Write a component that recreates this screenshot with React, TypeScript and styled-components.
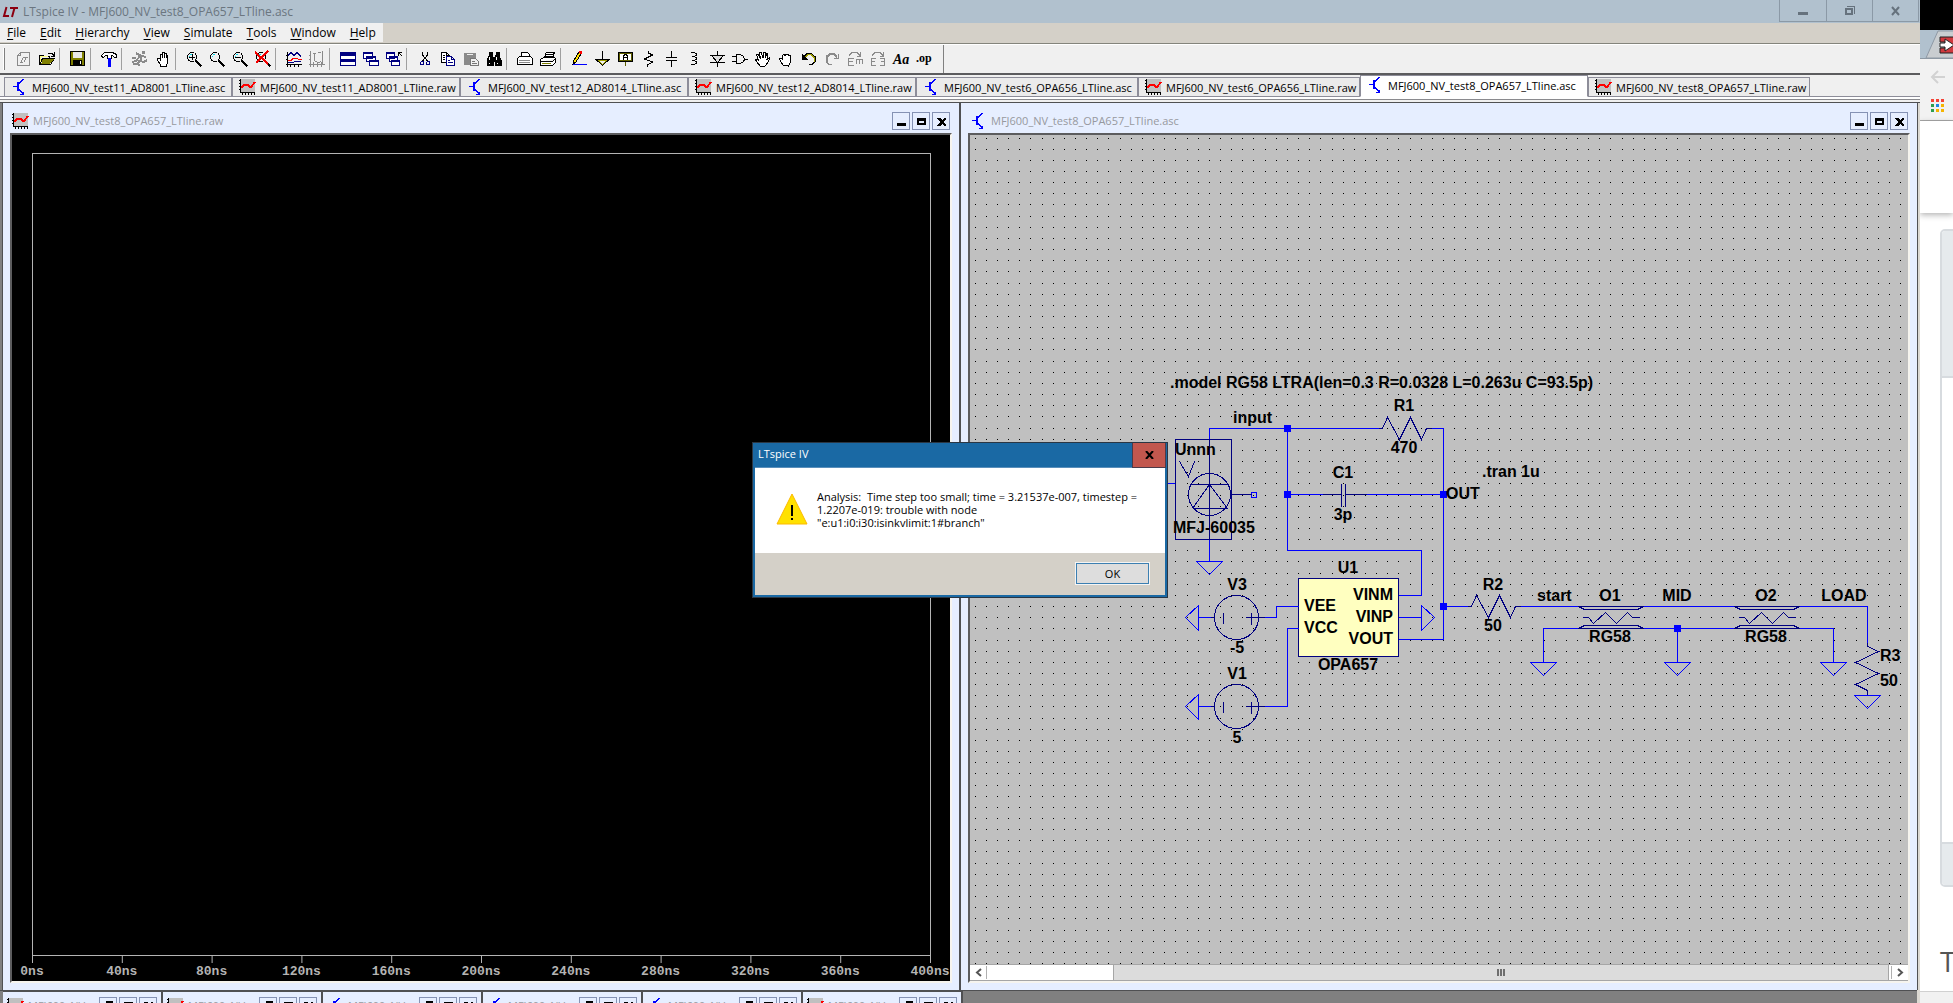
import React from "react";
import styled, { createGlobalStyle } from "styled-components";

const UI = `"Open Sans", "Noto Sans", sans-serif`;
const NAVY = "#000080";
const WIRE = "#0000ff";
const CHROME = "#f0f0f0";
const FRAME = "#e6eeff";
const EDGE = "#4f5052";

const GlobalStyle = createGlobalStyle`
  * { box-sizing: border-box; }
  body { margin: 0; overflow: hidden; font-family: ${UI}; font-size: 12px; color: #000; background: #fff; }
  button { font: inherit; color: inherit; padding: 0; border: 0; background: none; }
  svg { display: block; }
`;

const Screen = styled.div`
  display: flex;
  height: 100vh;
`;

const AppWindow = styled.main`
  position: relative;
  flex: 1;
  min-width: 0;
  display: flex;
  flex-direction: column;
  background: ${CHROME};
`;

const TitleBar = styled.header`
  display: flex;
  height: 23px;
  padding-right: 1px;
  background: #b1c1ce;
  color: #6b7680;
`;

const AppTitle = styled.h1`
  flex: 1;
  margin: 0;
  display: flex;
  align-items: center;
  gap: 5px;
  padding-left: 2px;
  font-size: 12px;
  line-height: 23px;
  font-weight: 400;
`;

const CaptionButtons = styled.div`
  display: flex;
  height: 22px;
  border: solid #8b99a6;
  border-width: 0 1px 1px 1px;
`;

const CaptionButton = styled.button`
  width: 46px;
  display: grid;
  place-items: center;
  & + & { border-left: 1px solid #8b99a6; }
`;

const MenuBar = styled.nav`
  display: flex;
  height: 22px;
  background: #d4d0c8;
  border-bottom: 1px solid #fff;
  box-shadow: inset 0 -1px 0 #84847c;
`;

const Menus = styled.div`
  display: flex;
  height: 19px;
  background: ${CHROME};
`;

const MenuItem = styled.button`
  padding: 0 7px;
  line-height: 19px;
  & > u { text-underline-offset: 2px; }
`;

const Toolbar = styled.div`
  display: flex;
  align-items: center;
  height: 30px;
  padding-left: 3px;
  border-bottom: 2px solid #5c5c5e;
`;

const Grip = styled.span`
  width: 2px;
  height: 22px;
  margin-right: 8px;
  border-right: 1px solid #808080;
  border-left: 1px solid #fff;
`;

const Tool = styled.button`
  width: 23px;
  height: 24px;
  padding-left: 3px;
  display: flex;
  align-items: center;
`;

const Separator = styled.span`
  width: 8px;
  height: 22px;
  border-left: 1px solid #a0a0a0;
`;

const ToolbarEnd = styled.span`
  align-self: stretch;
  width: 8px;
  border-right: 1px solid #808080;
`;

const TabStrip = styled.div`
  display: flex;
  align-items: flex-end;
  height: 22px;
  padding-left: 4px;
  background: linear-gradient(#8d8d99, #8d8d99) bottom / 100% 1px no-repeat ${CHROME};
`;

const Tab = styled.button<{ $selected?: boolean; $wide?: boolean }>`
  flex: 0 1 ${(p) => (p.$wide ? 228 : 222)}px;
  height: ${(p) => (p.$selected ? 22 : 20)}px;
  padding-left: 6px;
  padding-bottom: ${(p) => (p.$selected ? 2 : 0)}px;
  display: flex;
  align-items: center;
  gap: 5px;
  font-size: 11px;
  white-space: nowrap;
  background: ${(p) => (p.$selected ? "#fff" : "#ebebeb")};
  border: 1px solid #8d8d99;
  border-bottom-color: ${(p) => (p.$selected ? "#fff" : "#8d8d99")};
`;

const TabBase = styled.div`
  height: 6px;
  border-top: 2px solid #fff;
  border-bottom: 1px solid ${EDGE};
  box-shadow: inset 0 1px 0 #8a8a8e;
`;

const Workspace = styled.div`
  flex: 1;
  min-height: 0;
  display: grid;
  grid-template-columns: 1fr 1fr;
  gap: 2px;
  background: ${EDGE};
  border-left: 2px solid #808080;
  padding-left: 1px;
  padding-right: 1px;
  border-right: 2px solid #dcd9d2;
`;

const ChildWindow = styled.section`
  min-width: 0;
  min-height: 0;
  display: flex;
  flex-direction: column;
  padding: 0 7px 7px 7px;
  background: ${FRAME};
`;

const ChildTitle = styled.header`
  display: flex;
  align-items: center;
  height: 30px;
  padding: 6px 2px 0 2px;
  gap: 2px;
  color: #97999e;
`;

const ChildName = styled.h2`
  flex: 1;
  margin: 0 0 0 3px;
  font-size: 11px;
  line-height: 18px;
  font-weight: 400;
  white-space: nowrap;
`;

const FrameButton = styled.button`
  width: 18px;
  height: 18px;
  display: grid;
  place-items: center;
  border: 1px solid #8592b4;
`;

const Client = styled.div`
  flex: 1;
  min-height: 0;
  display: flex;
  flex-direction: column;
  border: 2px solid;
  border-color: #5c5c5e #f6f4ee #f6f4ee #5c5c5e;
`;

const PlotPane = styled.div`
  flex: 1;
  display: flex;
  flex-direction: column;
  padding: 18px 19px 0 20px;
  background: #000;
`;

const PlotFrame = styled.div`
  flex: 1;
  border: 1px solid #b4b4b4;
`;

const Axis = styled.svg`
  width: calc(100% - 1px);
  height: 25px;
  overflow: visible;
  font: bold 13px "Liberation Mono", monospace;
  fill: #b4b4b4;
  stroke: none;
`;

const Schematic = styled.svg`
  flex: 1;
  min-height: 0;
  width: 100%;
  background: #c0c0c0;
  font: bold 16px "Liberation Sans", Arial, sans-serif;
  & path, & circle, & rect { shape-rendering: crispEdges; }
`;

const ScrollBar = styled.div`
  display: flex;
  height: 17px;
  padding: 1px;
  background: #fff;
  border-top: 1px solid #a6a6a6;
  border-bottom: 1px solid #a6a6a6;
`;

const ScrollArrow = styled.button`
  width: 16px;
  display: grid;
  place-items: center;
  border-right: 1px solid #b0b0b0;
  &:last-child { border-right: 0; border-left: 1px solid #b0b0b0; }
`;

const Track = styled.div`
  flex: 1;
  display: flex;
  justify-content: flex-end;
  margin: -1px 2px -1px 0;
`;

const Thumb = styled.div`
  width: 86%;
  display: flex;
  justify-content: center;
  align-items: center;
  gap: 1px;
  background: #dcdcdc;
  border: solid #a6a6a6;
  border-width: 0 1px;
`;

const ThumbLine = styled.span`
  width: 2px;
  height: 7px;
  background: #6e6e6e;
`;

const IconRow = styled.footer`
  display: flex;
  height: 13px;
  overflow: hidden;
  gap: 2px;
  padding-left: 3px;
  background: linear-gradient(${EDGE}, ${EDGE}) top / 100% 1px no-repeat #808080;
  border-right: 3px solid #dcd9d2;
`;

const IconWindow = styled.section`
  width: 158px;
  height: 29px;
  display: flex;
  align-items: center;
  gap: 2px;
  padding: 0 4px;
  background: ${FRAME};
  border-top: 2px solid ${EDGE};
  box-shadow: 2px 0 0 ${EDGE};
  color: #97999e;
  flex: none;
`;

const Dialog = styled.section`
  position: absolute;
  top: 442px;
  left: calc(50% - 208px);
  width: 416px;
  display: flex;
  flex-direction: column;
  background: #1a69a4;
  border: 1px solid #2a3643;
  padding: 0 2px 2px;
`;

const DialogTitle = styled.header`
  display: flex;
  height: 25px;
  padding-left: 3px;
  border-bottom: 1px solid #5a8fbb;
  color: #fff;
`;

const DialogName = styled.h2`
  flex: 1;
  margin: 0;
  font-size: 11px;
  line-height: 22px;
  font-weight: 400;
`;

const DialogClose = styled.button`
  width: 34px;
  height: 25px;
  margin-right: -1px;
  display: grid;
  place-items: center;
  background: #c2574e;
  border: 1px solid #4c3a48;
  border-top: 0;
`;

const DialogBody = styled.div`
  display: flex;
  align-items: center;
  gap: 9px;
  height: 85px;
  padding: 0 21px 3px;
  background: #fff;
`;

const Message = styled.p`
  margin: 0;
  font-size: 11px;
  line-height: 13px;
  white-space: pre;
`;

const DialogActions = styled.div`
  display: flex;
  justify-content: flex-end;
  height: 42px;
  padding: 9px 15px;
  background: #d4d0c8;
`;

const OkButton = styled.button`
  width: 75px;
  height: 23px;
  font-size: 11px;
  background: #dddddd;
  border: 1px solid #f4f4f4;
  box-shadow: inset 0 0 0 1px #3c7fb1;
`;

const BrowserEdge = styled.aside`
  width: 33px;
  display: flex;
  flex-direction: column;
  overflow: hidden;
  background: #fff;
`;

const BrowserTop = styled.div`
  border-top: 30px solid #000;
  background: #b1c1ce;
  height: 59px;
  border-bottom: 1px solid #8e99a4;
`;

const BrowserTools = styled.div`
  height: 62px;
  padding: 10px 0 0 10px;
  display: flex;
  flex-direction: column;
  gap: 14px;
  background: #f2f2f2;
  border-bottom: 1px solid #a8a8a8;
`;

const PageHeader = styled.div`
  height: 92px;
  box-shadow: 0 2px 6px rgba(0, 0, 0, 0.3);
`;

const Card = styled.div`
  margin: 16px 0 0 20px;
  height: 658px;
  width: 60px;
  border: 2px solid #d7dbdf;
  border-radius: 5px;
  display: flex;
  flex-direction: column;
  background: #fff;
  overflow: hidden;
`;

const CardBand = styled.div<{ $tall?: boolean }>`
  height: ${(p) => (p.$tall ? 147 : 43)}px;
  border: 0 solid #d7dbdf;
  border-bottom-width: ${(p) => (p.$tall ? 2 : 0)}px;
  border-top-width: ${(p) => (p.$tall ? 0 : 2)}px;
  background: #e6eaed;
`;

const CardSpace = styled.div`
  flex: 1;
`;

const PageText = styled.p`
  flex: 1;
  margin: 0;
  padding: 54px 0 0 20px;
  font: 400 28px/40px ${UI};
  color: #555;
`;

const StatusEdge = styled.div`
  height: 12px;
  background: #f1f1f1;
  border-top: 1px solid #d0d0d0;
`;

const P = ({ d, c = "#000", f = "none", w = 1 }: { d: string; c?: string; f?: string; w?: number }) => (
  <path d={d} stroke={c} fill={f} strokeWidth={w} />
);

const lens = (
  <>
    <P d="M4 1.5h4M2.5 3v1M1.5 4v4M2.5 8v2M4 10.5h4M9.5 9v-1M10.5 8V4M9.5 4V3M2.5 2.5h1M8.5 2.5h1M2.5 9.5h1M8.5 9.5h1" f="none" />
    <P d="M10 10l5.5 5.5" w={2} />
    <P d="M3 5.5h1M4 3.5h2" c="#00d8e8" />
  </>
);

const hand = "M5.500 15.500v-2l-3-4v-2h2l1 1.500v-6h1.500v4-6h2v6-5h2v5-3h1.500v8l-1 2v2z";

const openHand = "M5.500 15.500l-4-5-1-2 1.500-.5 2 2-2.500-6 1.500-.5 2.500 4-1-6h1.500l2 5.500.5-6h1.500v6l2-4.500 1 .5-1 5.500 2.500-1.500v1.500l-4 6.500z";

const glyphs: Record<string, React.ReactNode> = {
  "New schematic": (
    <>
      <P d="M1.500 4.500l3-3h9v13h-12zM4.500 1.500v3h-3" c="#8a8a8a" />
      <P d="M4 11.500h3M5 11l2-4M7 6.500h5M10 7l-2 4" c="#8a8a8a" w={1} />
    </>
  ),
  Open: (
    <>
      <P d="M.5 13.500v-9h4l1 1h5v2M.5 13.500l3-6h12l-4 6z" />
      <P d="M2 13l2-5h11l-4 5z" c="none" f="#808000" />
      <P d="M1.500 11V5.500H9" c="#ffff80" />
      <P d="M9 2.500h4l2 2M15.500 1v4h-4" />
    </>
  ),
  Save: (
    <>
      <P d="M.5 .5h14v14h-14z" f="#808000" />
      <P d="M3 1h9v6H3z" c="none" f="#e8e8e8" />
      <P d="M3 9h9v6H3z" c="none" f="#000" />
      <P d="M10 10h1v3h-1z" c="none" f="#fff" />
    </>
  ),
  "Control panel": (
    <>
      <P d="M.5 4.500l3-3h8l4 2v3h-2l-2-2h-1v3h-4v-3h-2l-2 2h-1z" f="#fff" />
      <P d="M8.500 7v9" c="#0000ff" w={3} />
    </>
  ),
  Run: <P d="M10 1h3M10 2h3M4 2l3 2 3 1-2 5 4 1 3-2M8 5l-4 5-4 1M8 9l-2 3 1 3M10 5l4 1M1 13h4M0 7h4" c="#8a8a8a" w={2} />,
  Halt: <P d={hand} f="#fff" />,
  "Zoom in": (
    <>
      {lens}
      <P d="M3 6.500h6M6.500 3v6" w={1} />
    </>
  ),
  "Zoom area": lens,
  "Zoom out": (
    <>
      {lens}
      <P d="M3 6.500h6" />
    </>
  ),
  "Zoom fit": (
    <>
      {lens}
      <P d="M0 1l13 12M13 0L1 12" c="#f00000" w={2} />
    </>
  ),
  Autorange: (
    <>
      <P d="M1.500 1v14.500M0 13.500h16M4.500 13v3M8.500 13v3M12.500 13v3M0 4.500h2M0 8.500h2" />
      <P d="M2 4.500l3-3 3 3 3-3 4 4" c={NAVY} />
      <P d="M2 9.500h3l2-2h4l2 1h3" c="#ff0000" />
      <P d="M2 11.500h5l2-1h6" c={NAVY} />
    </>
  ),
  "Setup grid": <P d="M1.500 0v16M0 13.500h16M4.500 11v5M8.500 12v4M12.500 11v5M0 4.500h2M0 8.500h2M4 2.500h3M13.500 0v13M9 1.500h3M5.500 4v6M7 2l-2 2M6 10l4 2 2-2" c="#8a8a8a" />,
  Tile: (
    <>
      <P d="M.5 1.500h15v13H.5zM.5 8.500h15" c={NAVY} f="#fff" />
      <P d="M1 3h14M1 9.500h14" c={NAVY} w={3} />
    </>
  ),
  Cascade: (
    <>
      <P d="M.5 1.500h9v6h-9zM3.500 5.500h9v5h-9zM6.500 9.500h9v5h-9z" c={NAVY} f="#fff" />
      <P d="M0 2h10M3 6h10M6 10h10" c={NAVY} w={2} />
    </>
  ),
  "Close all": (
    <>
      <P d="M.5 1.500h8v6h-8zM3.500 5.500h8v5h-8zM5.500 9.500h8v5h-8z" c={NAVY} f="#fff" />
      <P d="M0 2h9M3 6h9M5 10h9" c={NAVY} w={2} />
      <P d="M12.500 5V1.500H16M13 2l3 3" />
    </>
  ),
  Cut: (
    <>
      <P d="M5.500 1v3l5 6M10.500 1v3l-5 6" />
      <P d="M4.500 10.500h2v3h-3v-2zM10.500 10.500h2v3h-3v-2z" c={NAVY} />
    </>
  ),
  Copy: (
    <>
      <P d="M1.500 1.500h5l3 3v7h-8zM6.500 1.500v3h3" f="#fff" />
      <P d="M6.500 5.500h5l3 3v6h-8zM11.500 5.500v3h3M8 9.500h2M8 11.500h5" c={NAVY} f="#fff" />
      <P d="M3 4.500h2M3 6.500h2M3 8.500h2" />
    </>
  ),
  Paste: (
    <>
      <P d="M1 2h12v12H1z" c="none" f="#8a8a8a" />
      <P d="M4 3.500h6" c="#f0f0f0" w={1} />
      <P d="M7.500 7.500h5l3 3v4h-8zM9 10.500h3M9 12.500h5" c="#777" f="#f0f0f0" />
    </>
  ),
  Find: (
    <>
      <P d="M3 1h3v3l1 3v7H1V9l2-4zM10 1h3v4l2 4v5H9V7l1-3zM6 6h4v4H6z" c="#000" f="#000" />
      <P d="M3.500 6v3M10.500 6v3M3 12h1M11 12h1" c="#fff" />
    </>
  ),
  "Print setup": (
    <>
      <P d="M4.500 6V1.500h6l2 2V6M.5 7.500l2-2h11l2 2v6h-15z" f="#fff" />
      <P d="M2 9.500h11M2 11.500h11" c="#888" />
    </>
  ),
  Print: (
    <>
      <P d="M4.500 6l2-5h8l-2 6M6 3.500h7M5 5.500h7M.5 8.500l3-2h11l1 1v4l-3 3h-12zM.5 10.500h12l3-3" f="#fff" />
      <P d="M2 12.500h9" c="#808000" />
    </>
  ),
  "Draw wire": (
    <>
      <P d="M2 13l1-4 5-8 2 2-5 8z" f="#ffe000" />
      <P d="M8 1h2v2" c="#ff0000" w={2} />
      <P d="M2 13.500h14" c={WIRE} />
    </>
  ),
  Ground: (
    <>
      <P d="M8.500 0v8M1 8.500h15M2 8.500l6.500 6 6.500-6" />
      <P d="M4.500 9.500h8l-4 4z" c="#a0a000" />
    </>
  ),
  "Label net": (
    <>
      <P d="M1.500 1.500h14v9h-14z" f="#fff" c="#000" />
      <P d="M2.500 2.500h12v7h-12zM8.500 11v4" c="#606000" />
      <P d="M6.500 9V5.500l1-2h2l1 2V9M7 6.500h3" />
    </>
  ),
  Resistor: <P d="M8.500 0v2l4 2-8 4 8 3-5 3v2" />,
  Capacitor: <P d="M8.500 0v6M3 6.500h11M3 9.500h11M8.500 10v6" />,
  Inductor: <P d="M5 1.500h3l2 1v2l-2 1H6h2l2 1v2l-2 1H6h2l2 1v2l-2 1H5" />,
  Diode: (
    <>
      <P d="M8.500 0v16M1 4.500h15M1 11.500h15" />
      <P d="M2.500 4.500h12l-6 7z" f="#ddd" />
    </>
  ),
  Component: <P d="M0 5.500h4M0 10.500h4M12 8.500h4M4.500 3.500h4l3 2 1 3-1 2-3 2h-4z" />,
  Move: <P d={openHand} f="#fff" />,
  Drag: <P d="M5.500 14.500l-3-4-1-3 1.500-.5 1 1V4.500l2-1 1 1 1-1.500 2 .5.500 1 2 .5v6l-2 4z" f="#fff" />,
  Undo: (
    <>
      <P d="M3 5.500l3-3h4l4 3v5l-3 3H8" />
      <P d="M4 6.500l3-3h3l3 3v4" c="#a0a000" />
      <P d="M1.500 4v4.500H6z" f="#000" />
    </>
  ),
  Redo: <P d="M13 5.500l-3-3H6l-4 3v5l3 3h3M13 6.500l-3-3H6l-3 3v4M14.500 3v4.500H10" c="#8a8a8a" />,
  Mirror: <P d="M2 4.500l3-3h5l3 3M13.500 1v4H10M7 7.500H1.500v7H7M1 10.500h5M9 8.500h7M9.500 8v5M12.500 8v5M15.500 8v5" c="#8a8a8a" />,
  Rotate: <P d="M2 4.500l3-3h5l3 3M13.500 1v4H10M6 7.500H1.500v7H6M1 10.500h4M10 7.500h4.500v7H10M15 10.500h-4" c="#8a8a8a" />,
  Text: (
    <text x="0" y="13" fontFamily="Liberation Serif, serif" fontStyle="italic" fontWeight="bold" fontSize="14">
      Aa
    </text>
  ),
  "SPICE directive": (
    <text x="0" y="11" fontFamily="Liberation Serif, serif" fontWeight="bold" fontSize="12">
      .op
    </text>
  ),
};

const toolGroups = [
  ["New schematic", "Open"],
  ["Save"],
  ["Control panel"],
  ["Run", "Halt"],
  ["Zoom in", "Zoom area", "Zoom out", "Zoom fit"],
  ["Autorange", "Setup grid"],
  ["Tile", "Cascade", "Close all"],
  ["Cut", "Copy", "Paste", "Find"],
  ["Print setup", "Print"],
  [
    "Draw wire", "Ground", "Label net", "Resistor", "Capacitor", "Inductor", "Diode", "Component",
    "Move", "Drag", "Undo", "Redo", "Mirror", "Rotate", "Text", "SPICE directive",
  ],
];

const IconBox = styled.svg`
  flex: none;
  overflow: visible;
  shape-rendering: crispEdges;
`;

const Icon16 = ({ children }: { children: React.ReactNode }) => (
  <IconBox width="16" height="16" aria-hidden="true">
    {children}
  </IconBox>
);

const FileIcon = ({ kind }: { kind: string }) => (
  <Icon16>
    {kind === "raw" ? (
      <>
        <rect x="2" width="14" height="13" fill="#c0c0c0" />
        <P d="M1.500 0v14M2 13.500h14M0 1.500h2M0 4.500h2M0 7.500h2M0 10.500h2M3.500 13v3M6.500 13v3M9.500 13v3M12.500 13v3M15.500 13v3" />
        <P d="M2 9l3-3h4l2 2h1l4-5" c="#ff0000" w={2} />
      </>
    ) : (
      <>
        <P d="M2 7.500h4M12.500 0l-5 5M7.500 10l5 5M12 12.500v3H9" c={WIRE} />
        <P d="M7 3v9" c={WIRE} w={2} />
      </>
    )}
  </Icon16>
);

const frameGlyphs: Record<string, React.ReactNode> = {
  Minimize: <path d="M1 7h9v3H1z" />,
  Maximize: <path d="M1 2h9v7H1zM3 5v2h5V5z" fillRule="evenodd" />,
  Restore: <path d="M3 1h7v6H8V4H3zM1 6h5v4H1z" fillRule="evenodd" />,
  Close: <path d="M1 2h3l2 2 2-2h2v1L7 6l3 3v1H8L6 8l-2 2H1V9l3-3-3-3z" />,
};

const FrameButtons = ({ names }: { names: string[] }) => (
  <>
    {names.map((name) => (
      <FrameButton key={name} aria-label={name}>
        <svg width="11" height="11" shapeRendering="crispEdges">{frameGlyphs[name]}</svg>
      </FrameButton>
    ))}
  </>
);

const tabs = [
  { name: "MFJ600_NV_test11_AD8001_LTline.asc", wide: true },
  { name: "MFJ600_NV_test11_AD8001_LTline.raw", wide: true },
  { name: "MFJ600_NV_test12_AD8014_LTline.asc", wide: true },
  { name: "MFJ600_NV_test12_AD8014_LTline.raw", wide: true },
  { name: "MFJ600_NV_test6_OPA656_LTline.asc" },
  { name: "MFJ600_NV_test6_OPA656_LTline.raw" },
  { name: "MFJ600_NV_test8_OPA657_LTline.asc", wide: true, selected: true },
  { name: "MFJ600_NV_test8_OPA657_LTline.raw" },
];

const times = ["0ns", "40ns", "80ns", "120ns", "160ns", "200ns", "240ns", "280ns", "320ns", "360ns", "400ns"];

const gridPitch = 11.155;
const gridDots = Array.from({ length: 75 }, (_, r) =>
  Array.from({ length: 84 }, (_, c) => `M${Math.floor(975.1 + c * gridPitch)} ${Math.floor(138.05 + r * gridPitch)}h1v1h-1z`).join("")
).join("");

const Ground = ({ x, y }: { x: number; y: number }) => (
  <path d={`M${x - 13} ${y}h26l-13 13z`} stroke={WIRE} fill="none" />
);

const Node = ({ x, y }: { x: number; y: number }) => <rect x={x - 3.5} y={y - 3.5} width="7" height="7" fill={WIRE} />;

const Source = ({ y }: { y: number }) => (
  <>
    <path d={`M1198 ${y - 12}v25l-13-13zM1198 ${y}h12`} stroke={WIRE} fill="none" />
    <circle cx="1236" cy={y} r="22" stroke={NAVY} fill="none" />
    <path d={`M1210 ${y}h4M1223 ${y - 5}v11M1245 ${y}h13M1251 ${y - 5}v12M1258 ${y}h6`} stroke={NAVY} fill="none" />
  </>
);

const Line = ({ x }: { x: number }) => (
  <path
    d={`M${x} 606h65M${x} 606l6 3h53l6-3M${x + 4} 617h6l5 6 12-11 11 11 11-11 5 5h7M${x} 628h65M${x} 628l6-3h53l6 3`}
    stroke={NAVY}
    fill="none"
  />
);

const labels: [string, number, number, ("middle" | "end")?][] = [
  [".model RG58 LTRA(len=0.3 R=0.0328 L=0.263u C=93.5p)", 1170, 388],
  ["R1", 1404, 411, "middle"],
  ["input", 1233, 423],
  ["470", 1404, 453, "middle"],
  ["Unnn", 1175, 455],
  ["C1", 1343, 478, "middle"],
  ["3p", 1343, 520, "middle"],
  [".tran 1u", 1482, 477],
  ["OUT", 1446, 499],
  ["MFJ-60035", 1173, 533],
  ["U1", 1348, 573, "middle"],
  ["V3", 1237, 590, "middle"],
  ["-5", 1237, 653, "middle"],
  ["V1", 1237, 679, "middle"],
  ["5", 1237, 743, "middle"],
  ["VEE", 1304, 611],
  ["VCC", 1304, 633],
  ["VINM", 1393, 600, "end"],
  ["VINP", 1393, 622, "end"],
  ["VOUT", 1393, 644, "end"],
  ["OPA657", 1348, 670, "middle"],
  ["R2", 1493, 590, "middle"],
  ["50", 1493, 631, "middle"],
  ["start", 1537, 601],
  ["O1", 1610, 601, "middle"],
  ["MID", 1677, 601, "middle"],
  ["O2", 1766, 601, "middle"],
  ["LOAD", 1844, 601, "middle"],
  ["RG58", 1610, 642, "middle"],
  ["RG58", 1766, 642, "middle"],
  ["R3", 1880, 661],
  ["50", 1880, 686],
];

const Circuit = () => (
  <Schematic role="img" aria-label="Schematic">
    <g transform="translate(-970 -135)">
      <path d={gridDots} fill="#000" />
      <g transform="translate(.5 .5)">
        <rect x="1298" y="578" width="100" height="78" fill="#ffffc0" stroke={NAVY} />
        <path
          d="M1209 439V428H1378M1431 428H1443V639H1398M1287 428V550H1421V595H1398M1287 494H1322M1366 494H1443
             M1150 483H1175M1209 539V561M1251 492h5v5h-5zM1264 617H1276V606H1298M1264 706H1287V628H1298
             M1398 617H1421M1421 605v25l13-13zM1443 606H1467M1520 606H1578M1543 662V628H1578M1643 606H1734
             M1643 628H1734M1677 628V662M1799 606H1867V642M1799 628H1833V662"
          stroke={WIRE}
          fill="none"
        />
        <path
          d="M1378 428h4l5-11 12 22 11-22 11 22 5-11h5M1322 494h19M1341 483v23M1345 483v23M1345 494h21
             M1175 439h56v100h-56zM1209 439V539M1190 484h38M1192 508h35M1209 484l-17 24M1209 484l18 24
             M1179 461l9 15 6-15M1231 494h20
             M1467 606h4l5-11 12 22 11-22 11 22 5-11h5M1867 642v4l11 5-23 11 23 11-23 11 12 6v5"
          stroke={NAVY}
          fill="none"
        />
        <circle cx="1209" cy="494" r="21" stroke={NAVY} fill="none" />
        <Source y={617} />
        <Source y={706} />
        <Line x={1578} />
        <Line x={1734} />
        <Ground x={1209} y={561} />
        <Ground x={1543} y={662} />
        <Ground x={1677} y={662} />
        <Ground x={1833} y={662} />
        <Ground x={1867} y={695} />
        <Node x={1287} y={428} />
        <Node x={1287} y={494} />
        <Node x={1443} y={494} />
        <Node x={1443} y={606} />
        <Node x={1677} y={628} />
      </g>
      {labels.map(([text, x, y, anchor]) => (
        <text key={`${text}${x}${y}`} x={x} y={y} textAnchor={anchor}>
          {text}
        </text>
      ))}
    </g>
  </Schematic>
);

export default function App() {
  return (
    <Screen>
      <GlobalStyle />
      <AppWindow>
        <TitleBar>
          <AppTitle>
            <svg width="16" height="12" aria-hidden="true">
              <path d="M4.500 1L2 10h5M8 2h8M12.500 2L10 11" fill="none" stroke="#8c0010" strokeWidth="2" />
            </svg>
            LTspice IV - MFJ600_NV_test8_OPA657_LTline.asc
          </AppTitle>
          <CaptionButtons>
            <CaptionButton aria-label="Minimize">
              <svg width="10" height="10"><path d="M0 6h10v3H0z" fill="#66727d" /></svg>
            </CaptionButton>
            <CaptionButton aria-label="Restore">
              <svg width="10" height="10" shapeRendering="crispEdges">
                <path d="M1 3h6v5H1z" fill="none" stroke="#66727d" strokeWidth="2" />
                <path d="M2 .5h7.500V8" fill="none" stroke="#66727d" />
              </svg>
            </CaptionButton>
            <CaptionButton aria-label="Close">
              <svg width="10" height="10"><path d="M1 1l7 8M8 1L1 9" stroke="#66727d" strokeWidth="2" /></svg>
            </CaptionButton>
          </CaptionButtons>
        </TitleBar>

        <MenuBar>
          <Menus>
            {["File", "Edit", "Hierarchy", "View", "Simulate", "Tools", "Window", "Help"].map((m) => (
              <MenuItem key={m}>
                <u>{m[0]}</u>
                {m.slice(1)}
              </MenuItem>
            ))}
          </Menus>
        </MenuBar>

        <Toolbar role="toolbar">
          <Grip />
          {toolGroups.map((group, i) => (
            <React.Fragment key={group[0]}>
              {i > 0 && <Separator />}
              {group.map((name) => (
                <Tool key={name} aria-label={name}>
                  <Icon16>{glyphs[name]}</Icon16>
                </Tool>
              ))}
            </React.Fragment>
          ))}
          <ToolbarEnd />
        </Toolbar>

        <TabStrip role="tablist">
          {tabs.map((t) => (
            <Tab key={t.name} role="tab" aria-selected={!!t.selected} $selected={t.selected} $wide={t.wide}>
              <FileIcon kind={t.name.slice(-3)} />
              {t.name}
            </Tab>
          ))}
        </TabStrip>
        <TabBase />

        <Workspace>
          <ChildWindow>
            <ChildTitle>
              <FileIcon kind="raw" />
              <ChildName>MFJ600_NV_test8_OPA657_LTline.raw</ChildName>
              <FrameButtons names={["Minimize", "Maximize", "Close"]} />
            </ChildTitle>
            <Client>
              <PlotPane>
                <PlotFrame />
                <Axis>
                  {times.map((t, i) => (
                    <React.Fragment key={t}>
                      <rect x={`${i * 10}%`} width="1" height="7" />
                      <text x={`${i * 10}%`} y="19" textAnchor="middle">{t}</text>
                    </React.Fragment>
                  ))}
                </Axis>
              </PlotPane>
            </Client>
          </ChildWindow>
          <ChildWindow>
            <ChildTitle>
              <FileIcon kind="asc" />
              <ChildName>MFJ600_NV_test8_OPA657_LTline.asc</ChildName>
              <FrameButtons names={["Minimize", "Maximize", "Close"]} />
            </ChildTitle>
            <Client>
              <Circuit />
              <ScrollBar>
                <ScrollArrow aria-label="Scroll left">
                  <svg width="8" height="9"><path d="M6 1L2 4.500 6 8" fill="none" stroke="#555" strokeWidth="2" /></svg>
                </ScrollArrow>
                <Track>
                  <Thumb>
                    <ThumbLine />
                    <ThumbLine />
                    <ThumbLine />
                  </Thumb>
                </Track>
                <ScrollArrow aria-label="Scroll right">
                  <svg width="8" height="9"><path d="M2 1l4 3.500L2 8" fill="none" stroke="#555" strokeWidth="2" /></svg>
                </ScrollArrow>
              </ScrollBar>
            </Client>
          </ChildWindow>
        </Workspace>

        <IconRow>
          {["raw", "raw", "asc", "asc", "asc", "raw"].map((kind, i) => (
            <IconWindow key={i}>
              <FileIcon kind={kind} />
              <ChildName>MFJ600_NV...</ChildName>
              <FrameButtons names={["Restore", "Maximize", "Close"]} />
            </IconWindow>
          ))}
        </IconRow>

        <Dialog role="dialog" aria-labelledby="dialog-name">
          <DialogTitle>
            <DialogName id="dialog-name">LTspice IV</DialogName>
            <DialogClose aria-label="Close">
              <svg width="9" height="8"><path d="M1 0l7 8M8 0L1 8" stroke="#000" strokeWidth="2" /></svg>
            </DialogClose>
          </DialogTitle>
          <DialogBody>
            <svg width="32" height="32" aria-hidden="true">
              <path d="M16 1l15 30H1z" fill="#ffe100" stroke="#fcb900" strokeLinejoin="round" />
              <path d="M15 12h2v11h-2zM15 25h2v2h-2z" fill="#000" />
            </svg>
            <Message>{`Analysis:  Time step too small; time = 3.21537e-007, timestep =
1.2207e-019: trouble with node
"e:u1:i0:i30:isinkvlimit:1#branch"`}</Message>
          </DialogBody>
          <DialogActions>
            <OkButton>OK</OkButton>
          </DialogActions>
        </Dialog>
      </AppWindow>

      <BrowserEdge>
        <BrowserTop>
          <svg width="33" height="28" aria-hidden="true">
            <path d="M6 28L18 1h16v27z" fill="#c9cdd0" stroke="#8e99a4" />
            <path d="M20 7h14v16H20v-5h5v-6h-5z" fill="#d0393e" stroke="#222" />
            <path d="M20 13h5V9l9 6-9 6v-4h-5z" fill="#fff" stroke="#222" />
          </svg>
        </BrowserTop>
        <BrowserTools>
          <svg width="16" height="16" aria-hidden="true">
            <path d="M15 8H2M8 2L2 8l6 6" fill="none" stroke="#d2d2d2" strokeWidth="2" />
          </svg>
          <svg width="16" height="14" aria-hidden="true">
            {["#f44336", "#f44336", "#f44336", "#2e9e4f", "#1e88e5", "#f5b400", "#2e9e4f", "#f5b400", "#f5b400"].map((c, i) => (
              <rect key={i} x={1 + (i % 3) * 5} y={Math.floor(i / 3) * 5} width="3" height="3" fill={c} />
            ))}
          </svg>
        </BrowserTools>
        <PageHeader />
        <Card>
          <CardBand $tall />
          <CardSpace />
          <CardBand />
        </Card>
        <PageText>T</PageText>
        <StatusEdge />
      </BrowserEdge>
    </Screen>
  );
}
